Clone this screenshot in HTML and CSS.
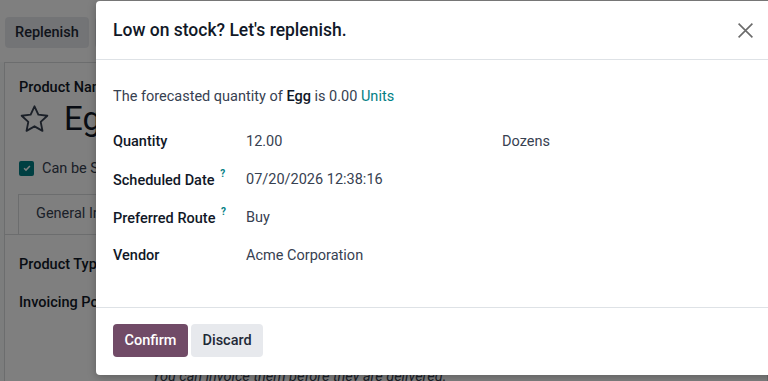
FILE: index.html
```html
<!DOCTYPE html>
<html>
<head>
<meta charset="utf-8">
<link rel="stylesheet" href="styles.css">
</head>
<body>
<div class="page">
  <div class="control-panel">
    <button class="bg-btn">Replenish</button>
    <button class="bg-btn">Update Quantity</button>
  </div>
  <div class="sheet">
    <div class="label-strong">Product Name</div>
    <div class="title-row">
      <svg class="star" viewBox="0 0 32 32" width="31" height="30"><path d="M16 2.5l4.1 8.9 9.6 1.1-7.1 6.6 1.9 9.5L16 23.8l-8.5 4.8 1.9-9.5-7.1-6.6 9.6-1.1z" fill="none" stroke="#374151" stroke-width="2" stroke-linejoin="round"/></svg>
      <span class="product-name">Egg</span>
    </div>
    <div class="check-row">
      <span class="checkbox"><svg viewBox="0 0 12 12" width="10" height="10"><path d="M2.5 6.2l2.3 2.3 4.7-4.9" fill="none" stroke="#fff" stroke-width="1.8"/></svg></span>
      <span>Can be Sold</span>
    </div>
    <div class="tabs">
      <div class="tab">General Information</div>
    </div>
    <div class="field-row label-strong">Product Type</div>
    <div class="field-row label-strong">Invoicing Policy</div>
    <div class="hint">You can invoice them before they are delivered.</div>
  </div>
</div>
<div class="backdrop"></div>
<div class="modal">
  <div class="modal-header">
    <h4 class="modal-title">Low on stock? Let's replenish.</h4>
    <button class="close" aria-label="Close"><svg viewBox="0 0 16 16" width="17" height="17"><path d="M1.5 1.5l13 13M14.5 1.5l-13 13" stroke="#6b6b6b" stroke-width="1.5" fill="none"/></svg></button>
  </div>
  <div class="modal-body">
    <p class="intro">The forecasted quantity of <b>Egg</b> is 0.00 <a class="link">Units</a></p>
    <div class="grid">
      <div class="lbl">Quantity</div><div class="val">12.00</div><div class="val">Dozens</div>
      <div class="lbl">Scheduled Date <sup class="help">?</sup></div><div class="val">07/20/2026 12:38:16</div><div></div>
      <div class="lbl">Preferred Route <sup class="help">?</sup></div><div class="val">Buy</div><div></div>
      <div class="lbl">Vendor</div><div class="val">Acme Corporation</div><div></div>
    </div>
  </div>
  <div class="modal-footer">
    <button class="btn btn-primary">Confirm</button>
    <button class="btn btn-secondary">Discard</button>
  </div>
</div>
</body>
</html>
```
FILE: styles.css
```css
* { box-sizing: border-box; }
html, body { margin: 0; padding: 0; }
body {
  width: 768px;
  height: 381px;
  overflow: hidden;
  font-family: Roboto, "Noto Sans", sans-serif;
  font-size: 14.5px;
  color: #374151;
  background: #f9fafb;
  position: relative;
}
.page { display: flex; flex-direction: column; }
.control-panel {
  display: flex;
  gap: 6px;
  padding: 17px 5px 0 5px;
  height: 62px;
  background: #fff;
}
.bg-btn {
  height: 31px;
  padding: 0 10px;
  border: none;
  border-radius: 4px;
  background: #e7e9ed;
  font-family: inherit;
  font-size: 14.5px;
  font-weight: 500;
  color: #1f2937;
}
.sheet {
  margin-left: 4px;
  background: #fff;
  border: 1px solid #d8dadd;
  padding: 16px 14px 0;
  height: 330px;
}
.label-strong { font-weight: 500; color: #111827; }
.title-row { display: flex; align-items: center; gap: 14px; margin-top: 3px; height: 40px; }
.product-name { font-size: 33px; color: #111827; line-height: 40px; }
.check-row { display: flex; align-items: center; gap: 8px; margin-top: 19px; height: 20px; }
.checkbox {
  width: 15px; height: 15px; border-radius: 2px;
  background: #017e84;
  display: flex; align-items: center; justify-content: center;
}
.tabs {
  margin: 16px -14px 0;
  padding-left: 13px;
  border-bottom: 1px solid #d8dadd;
  display: flex;
  height: 41px;
}
.tab {
  border: 1px solid #d8dadd;
  border-bottom: none;
  padding: 10px 17px 0;
  background: #fff;
  color: #374151;
}
.field-row { margin-top: 21px; height: 17px; }
.field-row + .field-row { margin-top: 21px; }
.hint { margin-top: 57px; margin-left: 133px; font-style: italic; color: #374151; }

.backdrop {
  position: absolute; inset: 0;
  background: rgba(0,0,0,0.5);
}
.modal {
  position: absolute;
  left: 96px; top: 1px;
  width: 680px;
  height: 374px;
  background: #fff;
  border-radius: 4px;
  box-shadow: 0 2px 8px rgba(0,0,0,0.25);
  display: flex;
  flex-direction: column;
}
.modal-header {
  display: flex;
  align-items: center;
  justify-content: space-between;
  height: 59px;
  padding: 0 16px 0 17px;
  border-bottom: 1px solid #dee2e6;
}
.modal-title {
  margin: 0;
  font-size: 17.5px;
  font-weight: 500;
  color: #111827;
}
.close {
  border: none; background: none; padding: 0;
  margin-right: 6px;
  display: flex;
}
.modal-body {
  padding: 26px 17px 0;
  height: 248px;
  border-bottom: 1px solid #dee2e6;
}
.intro { margin: 0; line-height: 21px; }
.intro b { font-weight: 500; color: #111827; }
.link { color: #017e84; text-decoration: none; }
.grid {
  margin-top: 15px;
  display: grid;
  grid-template-columns: 133px 256px 1fr;
  grid-auto-rows: 38px;
  align-items: center;
}
.lbl { font-weight: 500; color: #111827; }
.val { color: #374151; }
.help {
  color: #017e84;
  font-size: 10px;
  font-weight: 700;
  margin-left: 2px;
  position: relative;
  top: -2px;
}
.modal-footer {
  display: flex;
  gap: 3px;
  padding: 16px 17px;
}
.btn {
  height: 33px;
  padding: 0 11.5px;
  border: none;
  border-radius: 4px;
  font-family: inherit;
  font-size: 14.5px;
  font-weight: 500;
}
.btn-primary { background: #714b67; color: #fff; }
.btn-secondary { background: #e7e9ed; color: #1f2937; }
```
